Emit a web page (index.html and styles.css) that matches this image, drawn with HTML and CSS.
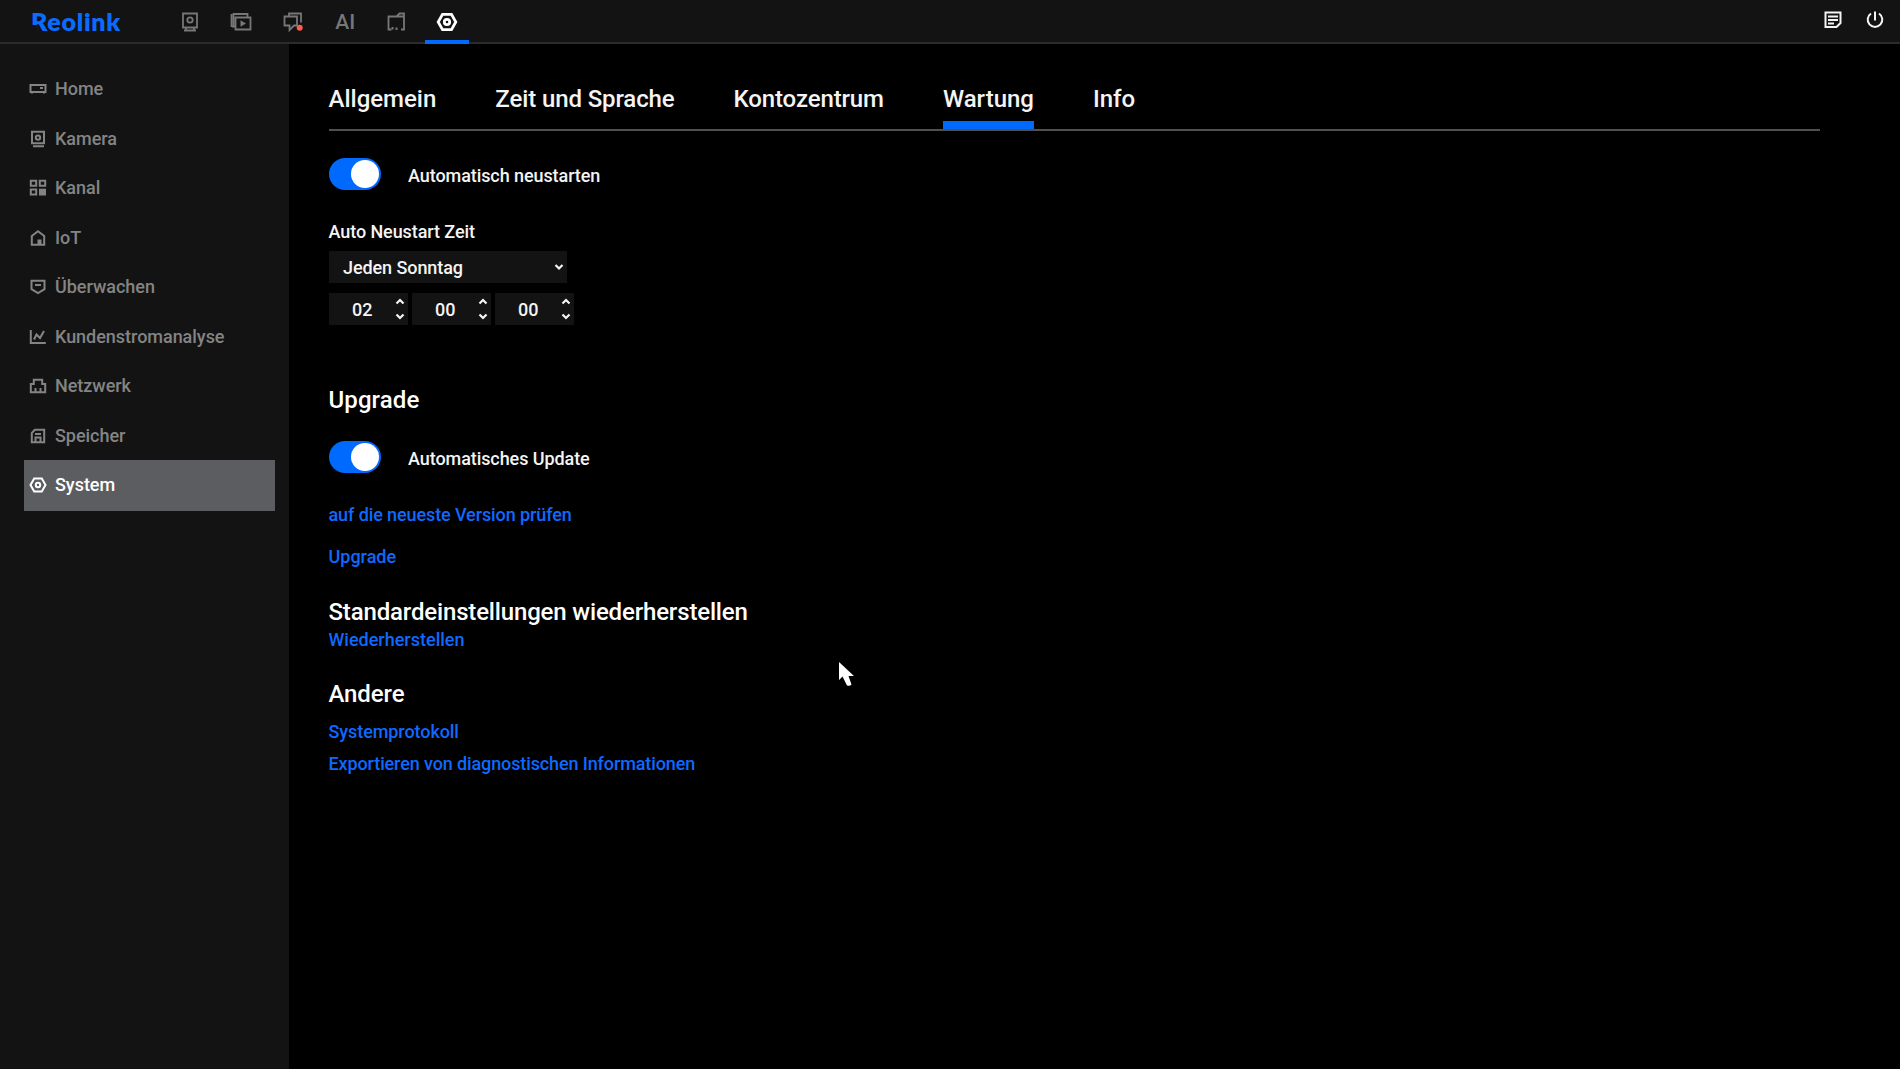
FILE: index.html
```
<!DOCTYPE html>
<html lang="de">
  <head>
    <meta charset="utf-8">
    <title>Reolink</title>
    <link rel="stylesheet" href="styles.css">
  </head>
  <body>
    <header class="topbar">
      <div class="logo">Reolink</div>
      <nav class="topnav">
        <a class="topnav-item">
          <svg width="24" height="24" viewBox="0 0 24 24"><path d="M5 3.500h14v14H5zM8 17.500v3M16 17.500v3M6 20.500h12" /><circle cx="12" cy="10" r="2.700" /></svg>
        </a>
        <a class="topnav-item">
          <svg width="24" height="24" viewBox="0 0 24 24"><path d="M4.500 17V4h14v3M2.500 17V4M6.500 7.500h15v12h-15zM3 16.500h3" /><path class="fill" d="M11.500 10.200l5.500 3.300-5.500 3.300z" /></svg>
        </a>
        <a class="topnav-item">
          <svg width="24" height="24" viewBox="0 0 24 24"><path d="M8 6.500v-3h12v9M3.500 6.500h12.500v9h-3l-4.500 4.500v-4.500h-5z" /><circle class="alert" cx="18.700" cy="17.800" r="3" /></svg>
        </a>
        <a class="topnav-item ai">AI</a>
        <a class="topnav-item">
          <svg width="24" height="24" viewBox="0 0 24 24"><path d="M7.500 19.500H4.500V6.500h8l3-3h4.500v16h-3M12.500 6.500h7" /><path class="fill" d="M7.500 17h2v2.500h-2zM11.500 17.500h2v2.500h-2z" /></svg>
        </a>
        <a class="topnav-item active">
          <svg width="24" height="24" viewBox="0 0 24 24"><path d="M7.500 4.300h9l4.300 7.700-4.300 7.700h-9L3.200 12z" /><circle cx="12" cy="12" r="2.700" /></svg>
        </a>
      </nav>
      <div class="tools">
        <svg width="20" height="20" viewBox="0 0 20 20"><path d="M2.500 2.500h15v10.500l-4 4h-11zM5 6.500h10M5 10h10M5 13.500h6" /></svg>
        <svg width="20" height="20" viewBox="0 0 20 20"><path d="M10 1.500v9M6 3.500a7.300 7.300 0 1 0 8 0" /></svg>
      </div>
    </header>

    <div class="page">
      <aside class="sidebar">
        <a class="side-item"><svg width="18" height="18" viewBox="0 0 18 18"><path d="M1.500 5h15v7h-15zM3 12v1.500M15 12v1.500M11 8h3" /></svg>Home</a>
        <a class="side-item"><svg width="18" height="18" viewBox="0 0 18 18"><path d="M3 1.800h12v11.500H3zM4 16.200h11" /><circle cx="9" cy="7.600" r="2.200" /></svg>Kamera</a>
        <a class="side-item"><svg width="18" height="18" viewBox="0 0 18 18"><path d="M1.800 1.800h5.400v5H1.800zM10.800 1.800h5.400v5h-5.400zM1.800 10.500h5.400v5H1.800z" /><path class="fill" d="M10 9.700h7v6.800h-7z" /></svg>Kanal</a>
        <a class="side-item"><svg width="18" height="18" viewBox="0 0 18 18"><path d="M2.800 7L9 2.200 15.200 7v8.700H2.800z" /><path class="fill" d="M8.500 10.500h4v5h-4z" /></svg>IoT</a>
        <a class="side-item"><svg width="18" height="18" viewBox="0 0 18 18"><path d="M2.500 2.800h13v8.400L9 15l-6.500-3.800zM6 7h6" /></svg>Überwachen</a>
        <a class="side-item"><svg width="18" height="18" viewBox="0 0 18 18"><path d="M1.800 2v13h15M5 11.500l2.500-5 3.500 3.500 4-7" /></svg>Kundenstromanalyse</a>
        <a class="side-item"><svg width="18" height="18" viewBox="0 0 18 18"><path d="M1.800 15.200V7h3V2.800h8.400V7h3v8.200zM6.500 15v-4M11.500 15v-4" /></svg>Netzwerk</a>
        <a class="side-item"><svg width="18" height="18" viewBox="0 0 18 18"><path d="M2.800 6l3-3.200h9.400v12.400H2.800zM6.500 15v-4.500h5V15M6 7h6" /></svg>Speicher</a>
        <a class="side-item active"><svg width="18" height="18" viewBox="0 0 18 18"><path d="M5.200 2.500h7.600L16.500 9l-3.700 6.500H5.200L1.500 9z" /><circle cx="9" cy="9" r="2.200" /></svg>System</a>
      </aside>

      <main class="content">
        <nav class="tabs">
          <a class="tab">Allgemein</a>
          <a class="tab tight">Zeit und Sprache</a>
          <a class="tab tight">Kontozentrum</a>
          <a class="tab active">Wartung</a>
          <a class="tab">Info</a>
        </nav>

        <div class="switch-row">
          <span class="switch"></span>
          <span class="switch-label">Automatisch neustarten</span>
        </div>

        <div class="field-label">Auto Neustart Zeit</div>
        <div class="select">
          <span>Jeden Sonntag</span>
          <svg width="10" height="8" viewBox="0 0 10 8"><path d="M1.500 2L5 5.500 8.500 2" /></svg>
        </div>
        <div class="time">
          <div class="spinner">
            <span>02</span>
            <svg width="10" height="22" viewBox="0 0 10 22"><path d="M1.500 5.500L5 2 8.500 5.500M1.500 16.500L5 20 8.500 16.500" /></svg>
          </div>
          <div class="spinner">
            <span>00</span>
            <svg width="10" height="22" viewBox="0 0 10 22"><path d="M1.500 5.500L5 2 8.500 5.500M1.500 16.500L5 20 8.500 16.500" /></svg>
          </div>
          <div class="spinner">
            <span>00</span>
            <svg width="10" height="22" viewBox="0 0 10 22"><path d="M1.500 5.500L5 2 8.500 5.500M1.500 16.500L5 20 8.500 16.500" /></svg>
          </div>
        </div>

        <h2 class="upgrade-title">Upgrade</h2>
        <div class="switch-row">
          <span class="switch"></span>
          <span class="switch-label">Automatisches Update</span>
        </div>
        <a class="link check">auf die neueste Version prüfen</a>
        <a class="link upgrade">Upgrade</a>

        <h2 class="reset-title">Standardeinstellungen wiederherstellen</h2>
        <a class="link reset">Wiederherstellen</a>

        <h2 class="other-title">Andere</h2>
        <a class="link log">Systemprotokoll</a>
        <a class="link export">Exportieren von diagnostischen Informationen</a>
      </main>
    </div>

    <svg class="cursor" width="18" height="27" viewBox="0 0 18 27"><path d="M1 1v18l3.500-3.500L9 24.500q3 1 4.500-1L10.500 15H16z" /></svg>
  </body>
</html>
```
FILE: styles.css
```
body {
  margin: 0;
  height: 1069px;
  display: flex;
  flex-direction: column;
  overflow: hidden;
  background: #000;
  color: #f4f4f4;
  font-family: Roboto, "Liberation Sans", sans-serif;
  font-size: 18px;
  font-weight: 500;
  line-height: 24px;
}

svg {
  display: block;
  flex: none;
  fill: none;
  stroke: currentColor;
  stroke-width: 2;
}

svg .fill {
  fill: currentColor;
  stroke: none;
}

svg .alert {
  fill: #ff5a50;
  stroke: none;
}

/* top bar */
.topbar {
  display: flex;
  box-sizing: border-box;
  height: 44px;
  border-bottom: 2px solid #2b2b2b;
  background: #131313;
}

.logo {
  position: relative;
  width: 137px;
  padding-left: 31px;
  color: #0a6cff;
  font-family: Lato, sans-serif;
  font-size: 25px;
  font-weight: 800;
  letter-spacing: 0.7px;
  line-height: 43px;
}

/* cuts the foot off the R */
.logo::before {
  content: "";
  position: absolute;
  left: 30px;
  top: 25px;
  width: 7px;
  height: 8px;
  background: #131313;
}

.topnav {
  display: flex;
  gap: 7.4px;
  height: 44px;
}

.topnav-item {
  display: flex;
  justify-content: center;
  box-sizing: border-box;
  width: 44px;
  height: 44px;
  padding-top: 10px;
  color: #777;
}

.topnav-item svg {
  stroke-width: 1.8;
}

.topnav-item.active {
  color: #fff;
  border-bottom: 4px solid #006aff;
}

.topnav-item.active svg {
  stroke-width: 2.8;
}

.topnav-item.ai {
  padding-left: 2px;
  font-size: 21px;
}

.tools {
  display: flex;
  gap: 21.5px;
  margin-left: auto;
  padding: 10px 15.5px 0 0;
}

/* sidebar */
.page {
  display: flex;
  flex: 1;
}

.sidebar {
  box-sizing: border-box;
  width: 289px;
  padding: 19.5px 14px 0 23.5px;
  background: #131313;
}

.side-item {
  display: flex;
  align-items: center;
  gap: 8.5px;
  height: 51px;
  margin-bottom: -1.5px;
  padding-left: 5px;
  color: #848484;
  letter-spacing: -0.03px;
}

.side-item.active {
  background: #5c5d61;
  color: #fff;
}

/* content */
.content {
  flex: 1;
  padding: 40px 80px 0 39.5px;
}

.tabs {
  display: flex;
  gap: 59px;
  border-bottom: 2px solid #505053;
}

.tab {
  padding-bottom: 7px;
  border-bottom: 8px solid transparent;
  font-size: 24px;
  line-height: 30px;
}

.tab.tight {
  letter-spacing: -0.12px;
}

.tab.active {
  border-color: #006aff;
}

.switch-row {
  display: flex;
  align-items: flex-end;
  gap: 27.5px;
  margin-top: 27px;
}

.switch {
  display: flex;
  justify-content: flex-end;
  box-sizing: border-box;
  width: 52px;
  height: 32px;
  padding: 2px;
  border-radius: 16px;
  background: #006aff;
}

.switch::after {
  content: "";
  width: 28px;
  height: 28px;
  border-radius: 50%;
  background: #fff;
}

.switch-label {
  margin-bottom: 2px;
  letter-spacing: -0.08px;
}

.field-label {
  margin-top: 30px;
  letter-spacing: -0.08px;
}

.select {
  display: flex;
  align-items: center;
  justify-content: space-between;
  box-sizing: border-box;
  width: 238px;
  height: 32px;
  margin-top: 7px;
  padding: 0 3px 0 14.5px;
  background: #131313;
  letter-spacing: -0.08px;
}

.select span,
.spinner span {
  padding-top: 2px;
}

.time {
  display: flex;
  gap: 4px;
  margin-top: 10px;
}

.spinner {
  display: flex;
  align-items: center;
  justify-content: space-between;
  box-sizing: border-box;
  width: 79px;
  height: 32px;
  padding: 0 3px 0 23.5px;
  background: #131313;
}

.select svg,
.spinner svg {
  stroke-width: 2.2;
}

h2 {
  margin: 0;
  color: #fff;
  font-size: 24px;
  font-weight: 500;
  line-height: 30px;
}

.link {
  display: block;
  color: #0f69ff;
}

.upgrade-title {
  margin-top: 60px;
  margin-bottom: -1px;
  letter-spacing: 0.1px;
}

.check {
  margin-top: 30px;
  letter-spacing: -0.1px;
}

.upgrade {
  margin-top: 18px;
}

.reset-title {
  margin-top: 28px;
  letter-spacing: -0.16px;
}

.reset {
  margin-top: 1px;
}

.other-title {
  margin-top: 27px;
  letter-spacing: -0.1px;
}

.log {
  margin-top: 11px;
  letter-spacing: -0.08px;
}

.export {
  margin-top: 8px;
  letter-spacing: -0.12px;
}

/* mouse pointer */
.cursor {
  position: absolute;
  left: 838px;
  top: 661px;
  fill: #fff;
  stroke: none;
}
```
